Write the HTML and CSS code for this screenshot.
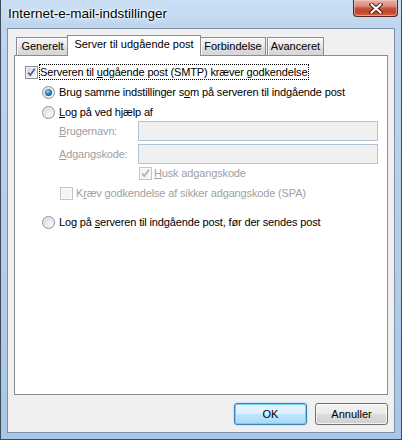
FILE: index.html
```html
<!DOCTYPE html>
<html lang="da">
<head>
<meta charset="utf-8">
<title>Internet-e-mail-indstillinger</title>
<link rel="stylesheet" href="styles.css">
</head>
<body>
<div class="window">
  <div class="titlebar">
    <span class="title">Internet-e-mail-indstillinger</span>
    <div class="close-btn">
      <svg width="14" height="11" viewBox="0 0 14 11">
        <path d="M2.5 1.5 L11.5 9.5 M11.5 1.5 L2.5 9.5" stroke="#4b2119" stroke-width="4" stroke-linecap="square" fill="none"/>
        <path d="M2.5 1.5 L11.5 9.5 M11.5 1.5 L2.5 9.5" stroke="#ffffff" stroke-width="2" stroke-linecap="square" fill="none"/>
      </svg>
    </div>
  </div>
  <div class="client">
    <div class="tabs">
      <div class="tab tab-generelt">Generelt</div>
      <div class="tab tab-active tab-server">Server til udgående post</div>
      <div class="tab tab-forbindelse">Forbindelse</div>
      <div class="tab tab-avanceret">Avanceret</div>
    </div>
    <div class="panel">
      <div class="row row-main">
        <span class="check checked">
          <svg width="11" height="11" viewBox="0 0 11 11"><path d="M2.2 5.6 L4.3 8.2 L8.8 1.8" stroke="#4a5f93" stroke-width="1.7" fill="none"/></svg>
        </span>
        <span class="focus">Serveren til <u>u</u>dgående post (SMTP) kræver godkendelse</span>
      </div>
      <div class="row row-radio row-r1">
        <span class="radio selected"><span class="dot"></span></span>
        <span class="label">Brug samme indstillinger s<u>o</u>m på serveren til indgående post</span>
      </div>
      <div class="row row-radio row-r2">
        <span class="radio"></span>
        <span class="label"><u>L</u>og på ved hjælp af</span>
      </div>
      <div class="field-row field-user">
        <span class="field-label disabled"><u>B</u>rugernavn:</span>
        <span class="input"></span>
      </div>
      <div class="field-row field-pass">
        <span class="field-label disabled"><u>A</u>dgangskode:</span>
        <span class="input"></span>
      </div>
      <div class="row row-husk">
        <span class="check check-disabled">
          <svg width="11" height="11" viewBox="0 0 11 11"><path d="M2.2 5.6 L4.3 8.2 L8.8 1.8" stroke="#b3b3b3" stroke-width="1.7" fill="none"/></svg>
        </span>
        <span class="label label-husk disabled"><u>H</u>usk adgangskode</span>
      </div>
      <div class="row row-spa">
        <span class="check check-disabled"></span>
        <span class="label label-spa disabled">K<u>r</u>æv godkendelse af sikker adgangskode (SPA)</span>
      </div>
      <div class="row row-radio row-r3">
        <span class="radio"></span>
        <span class="label">Log på <u>s</u>erveren til indgående post, før der sendes post</span>
      </div>
    </div>
    <div class="buttons">
      <button class="btn btn-default">OK</button>
      <button class="btn">Annuller</button>
    </div>
  </div>
</div>
</body>
</html>
```

FILE: styles.css
```css
* {
  box-sizing: border-box;
}

html,
body {
  margin: 0;
  padding: 0;
}

body {
  width: 402px;
  height: 440px;
  overflow: hidden;
  font-family: "Liberation Sans", Arial, sans-serif;
  font-size: 11px;
  letter-spacing: -0.15px;
  color: #000;
  background: #ffffff;
}

.window {
  width: 402px;
  height: 440px;
  display: flex;
  flex-direction: column;
  border: 1px solid #3e4b5c;
  border-top: none;
  background: linear-gradient(180deg, #cadff4 0px, #bdd5ee 30px, #b3cdea 60%, #a9c6e6 100%);
}

.titlebar {
  height: 28px;
  flex: none;
  display: flex;
  align-items: flex-start;
  padding: 0 3px 0 7px;
}

.title {
  flex: 1;
  font-size: 13.5px;
  letter-spacing: 0;
  line-height: 27px;
  color: #000;
  text-shadow: 0 0 6px #ffffff, 0 0 3px #ffffff, 0 0 2px #ffffff;
}

.close-btn {
  width: 45px;
  height: 17px;
  border: 1px solid #57261d;
  border-top: none;
  border-radius: 0 0 4px 4px;
  background: linear-gradient(180deg, #e9b1a6 0%, #d88a79 40%, #c9553d 50%, #c4432a 75%, #d26a4f 100%);
  box-shadow: inset 0 0 0 1px rgba(255, 210, 200, 0.5);
  display: flex;
  align-items: center;
  justify-content: center;
}

.close-btn svg {
  display: block;
}

.client {
  flex: 1;
  margin: 0 6px 6px;
  border: 1px solid #7d90a8;
  background: #f0f0f0;
  padding: 6px 6px 7px;
  display: flex;
  flex-direction: column;
}

/* Tabs */
.tabs {
  height: 20px;
  flex: none;
  display: flex;
  align-items: flex-end;
  padding-left: 2px;
  position: relative;
  z-index: 1;
}

.tab {
  height: 18px;
  border: 1px solid #898c95;
  border-bottom: none;
  background: linear-gradient(180deg, #f4f4f4 0%, #ebebeb 45%, #dedede 55%, #d6d6d6 100%);
  box-shadow: inset 1px 1px 0 #fbfbfb;
  line-height: 17px;
  letter-spacing: 0;
  text-align: center;
  white-space: nowrap;
}

.tab-generelt {
  width: 53px;
}

.tab-server {
  width: 134px;
  margin-left: -2px;
  margin-right: -1px;
}

.tab-forbindelse {
  width: 66px;
}

.tab-avanceret {
  width: 57px;
  margin-left: 1px;
}

.tab-active {
  height: 21px;
  margin-bottom: -1px;
  background: #ffffff;
  box-shadow: none;
  line-height: 16px;
  padding-bottom: 4px;
  position: relative;
  z-index: 2;
}

/* Panel */
.panel {
  flex: 1;
  background: #ffffff;
  border: 1px solid #898c95;
  padding-top: 8px;
  display: flex;
  flex-direction: column;
}

.row {
  height: 16px;
  display: flex;
  align-items: center;
  white-space: nowrap;
  line-height: 16px;
}

.row-main {
  padding-left: 10px;
}

.row-radio {
  padding-left: 27px;
}

.row-r1,
.row-r2 {
  margin-top: 4px;
}

.row-r3 {
  margin-top: 13px;
}

.row-husk {
  margin-top: 1px;
  padding-left: 124px;
}

.row-spa {
  margin-top: 4px;
  padding-left: 45px;
}

.focus {
  height: 16px;
  margin-left: 1px;
  border: 1px dotted #000;
  line-height: 14px;
  padding: 0 1px 0 0;
}

.label {
  margin-left: 4px;
}

.label-husk {
  margin-left: 2px;
}

.label-spa {
  margin-left: 3px;
}

.disabled {
  color: #a0a0a0;
}

/* Checkboxes */
.check {
  width: 13px;
  height: 13px;
  flex: none;
  border: 1px solid #8e8f8f;
  background: linear-gradient(135deg, #cbcfd5 0%, #e6e8eb 50%, #f7f7f7 100%);
  box-shadow: inset 0 0 0 1px #f4f4f4;
  display: flex;
  align-items: center;
  justify-content: center;
}

.check svg {
  display: block;
}

.check-disabled {
  border-color: #c4c4c4;
  background: #f4f4f4;
  box-shadow: inset 0 0 0 1px #fafafa;
}

/* Radios */
.radio {
  width: 13px;
  height: 13px;
  flex: none;
  border-radius: 50%;
  border: 1px solid #8e8f8f;
  background: radial-gradient(circle at 65% 65%, #fbfbfb 0%, #e4e6e9 45%, #c9ccd1 100%);
  box-shadow: inset 0 0 0 1px #f2f2f2;
  display: flex;
  align-items: center;
  justify-content: center;
}

.radio .dot {
  width: 7px;
  height: 7px;
  border-radius: 50%;
  background: radial-gradient(circle at 40% 35%, #a8dcff 0%, #3d8fd0 35%, #11589a 70%, #0a3f73 100%);
}

/* Fields */
.field-row {
  height: 20px;
  display: flex;
  align-items: center;
  padding-left: 44px;
  white-space: nowrap;
}

.field-user {
  margin-top: 1px;
}

.field-pass {
  margin-top: 3px;
}

.field-label {
  width: 79px;
  flex: none;
}

.input {
  width: 240px;
  height: 20px;
  border: 1px solid #b2c3d8;
  background: #f0f0f0;
}

/* Buttons */
.buttons {
  flex: none;
  display: flex;
  justify-content: flex-end;
  gap: 8px;
  margin-top: 8px;
}

.btn {
  width: 73px;
  height: 22px;
  margin: 0;
  padding: 0;
  border: 1px solid #707070;
  border-radius: 3px;
  background: linear-gradient(180deg, #f2f2f2 0%, #ebebeb 48%, #dddddd 52%, #cfcfcf 100%);
  box-shadow: inset 0 0 0 1px rgba(255, 255, 255, 0.7);
  font-family: "Liberation Sans", Arial, sans-serif;
  font-size: 11px;
  color: #000;
  line-height: 20px;
}

.btn-default {
  border-color: #3c7fb1;
  background: linear-gradient(180deg, #eaf6fd 0%, #d9f0fc 48%, #bee6fd 52%, #a7d9f5 100%);
  box-shadow: inset 0 0 0 1px #6fd2f8, 0 0 2px rgba(60, 190, 240, 0.6);
}
```
